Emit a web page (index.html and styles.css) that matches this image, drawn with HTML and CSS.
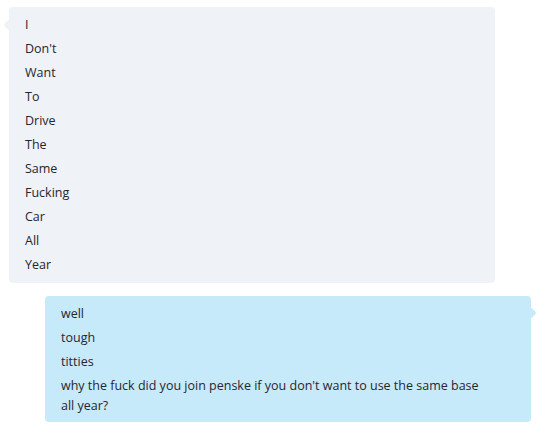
FILE: index.html
```html
<!DOCTYPE html>
<html lang="en">
<head>
    <meta charset="UTF-8">
    <meta name="viewport" content="width=device-width, initial-scale=1.0">
    <title>Chat</title>
    <link rel="stylesheet" href="styles.css">
</head>
<body>
    <div class="chat">
        <div class="bubble incoming">
            <p>I</p>
            <p>Don't</p>
            <p>Want</p>
            <p>To</p>
            <p>Drive</p>
            <p>The</p>
            <p>Same</p>
            <p>Fucking</p>
            <p>Car</p>
            <p>All</p>
            <p>Year</p>
        </div>
        <div class="bubble outgoing">
            <p>well</p>
            <p>tough</p>
            <p>titties</p>
            <p>why the fuck did you join penske if you don't want to use the same base all year?</p>
        </div>
    </div>
</body>
</html>
```

FILE: styles.css
```css
body {
    margin: 0;
    background: #ffffff;
    font-family: 'Open Sans', 'Noto Sans', sans-serif;
    font-size: 12.5px;
    color: #26262f;
}

.chat {
    display: flex;
    flex-direction: column;
    gap: 13px;
    padding-top: 7px;
}

.bubble {
    position: relative;
    width: 486px;
    box-sizing: border-box;
    padding: 8px 40px 8px 16px;
    border-radius: 4px;
    display: flex;
    flex-direction: column;
    gap: 4px;
}

.bubble p {
    margin: 0;
    line-height: 20px;
}

.bubble::before {
    content: '';
    position: absolute;
    width: 8px;
    height: 8px;
    border-radius: 2px;
    transform: rotate(45deg);
}

.incoming {
    margin-left: 9px;
    background: #eff2f7;
}

.incoming::before {
    left: -4px;
    top: 14px;
    background: #eff2f7;
}

.outgoing {
    margin-left: 45px;
    padding-bottom: 6px;
    background: #c6eafa;
}

.outgoing::before {
    right: -4px;
    top: 13px;
    background: #c6eafa;
}
```
